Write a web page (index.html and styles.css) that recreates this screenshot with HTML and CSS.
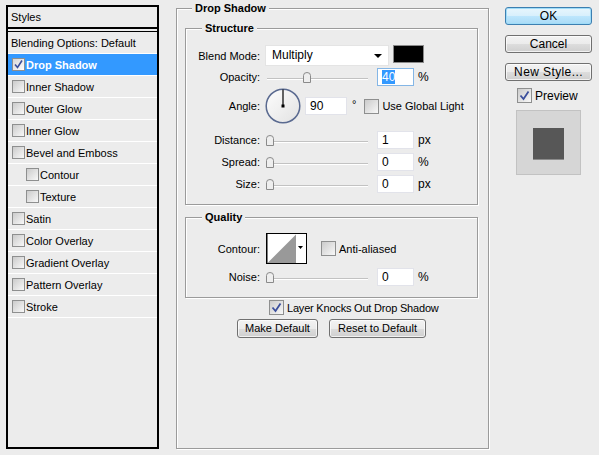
FILE: index.html
```html
<!DOCTYPE html>
<html lang="en">
<head>
    <meta charset="UTF-8">
    <title>Layer Style</title>
    <link rel="stylesheet" href="styles.css">
</head>
<body>
    <div class="dialog">
        <!-- Styles list -->
        <div class="styles-list">
            <div class="list-head">Styles</div>
            <ul class="list">
                <li class="item plain">Blending Options: Default</li>
                <li class="item selected"><span class="check"><svg width="11" height="11" viewBox="0 0 11 11"><path d="M2 5.5 L4.5 8.5 L9 1.5" fill="none" stroke="#3b4f9c" stroke-width="1.6"/></svg></span>Drop Shadow</li>
                <li class="item"><span class="check"></span>Inner Shadow</li>
                <li class="item"><span class="check"></span>Outer Glow</li>
                <li class="item"><span class="check"></span>Inner Glow</li>
                <li class="item"><span class="check"></span>Bevel and Emboss</li>
                <li class="item sub"><span class="check"></span>Contour</li>
                <li class="item sub"><span class="check"></span>Texture</li>
                <li class="item"><span class="check"></span>Satin</li>
                <li class="item"><span class="check"></span>Color Overlay</li>
                <li class="item"><span class="check"></span>Gradient Overlay</li>
                <li class="item"><span class="check"></span>Pattern Overlay</li>
                <li class="item"><span class="check"></span>Stroke</li>
            </ul>
        </div>

        <!-- Drop Shadow settings -->
        <div class="box main">
            <span class="legend">Drop Shadow</span>

            <div class="box group structure">
                <span class="legend">Structure</span>
                <div class="row row-blend">
                    <span class="lbl">Blend Mode:</span>
                    <div class="select">Multiply<span class="arrow"></span></div>
                    <div class="swatch"></div>
                </div>
                <div class="row">
                    <span class="lbl">Opacity:</span>
                    <div class="slider"><span class="thumb" style="left: 37px"><svg width="8" height="11" viewBox="0 0 8 11"><path d="M0.5 10.5 V3.5 Q0.5 0.5 4 0.5 Q7.5 0.5 7.5 3.5 V10.5 Z" fill="#eee" stroke="#8a8a8a"/></svg></span></div>
                    <div class="field focus"><span class="sel">40</span></div>
                    <span class="unit">%</span>
                </div>
                <div class="row row-angle">
                    <span class="lbl">Angle:</span>
                    <svg class="dial" width="36" height="36" viewBox="0 0 36 36">
                        <defs>
                            <linearGradient id="dialfill" x1="0" y1="0" x2="1" y2="1">
                                <stop offset="0" stop-color="#fdfdfd"/>
                                <stop offset="1" stop-color="#e2e2e2"/>
                            </linearGradient>
                        </defs>
                        <circle cx="18" cy="18" r="16.8" fill="url(#dialfill)" stroke="#5a6a90" stroke-width="1.5"/>
                        <line x1="18" y1="18" x2="18" y2="1.5" stroke="#000" stroke-width="1.2"/>
                        <rect x="16.5" y="16.5" width="3" height="3" fill="#000"/>
                    </svg>
                    <div class="field wide">90</div>
                    <span class="deg">°</span>
                    <span class="check big"></span>
                    <span class="chk-text">Use Global Light</span>
                </div>
                <div class="row row-gap">
                    <span class="lbl">Distance:</span>
                    <div class="slider"><span class="thumb"><svg width="8" height="11" viewBox="0 0 8 11"><path d="M0.5 10.5 V3.5 Q0.5 0.5 4 0.5 Q7.5 0.5 7.5 3.5 V10.5 Z" fill="#eee" stroke="#8a8a8a"/></svg></span></div>
                    <div class="field">1</div>
                    <span class="unit">px</span>
                </div>
                <div class="row">
                    <span class="lbl">Spread:</span>
                    <div class="slider"><span class="thumb"><svg width="8" height="11" viewBox="0 0 8 11"><path d="M0.5 10.5 V3.5 Q0.5 0.5 4 0.5 Q7.5 0.5 7.5 3.5 V10.5 Z" fill="#eee" stroke="#8a8a8a"/></svg></span></div>
                    <div class="field">0</div>
                    <span class="unit">%</span>
                </div>
                <div class="row">
                    <span class="lbl">Size:</span>
                    <div class="slider"><span class="thumb"><svg width="8" height="11" viewBox="0 0 8 11"><path d="M0.5 10.5 V3.5 Q0.5 0.5 4 0.5 Q7.5 0.5 7.5 3.5 V10.5 Z" fill="#eee" stroke="#8a8a8a"/></svg></span></div>
                    <div class="field">0</div>
                    <span class="unit">px</span>
                </div>
            </div>

            <div class="box group quality">
                <span class="legend">Quality</span>
                <div class="row row-contour">
                    <span class="lbl">Contour:</span>
                    <svg class="contour" width="41" height="31" viewBox="0 0 41 31">
                        <rect x="0.5" y="0.5" width="40" height="30" fill="#fff" stroke="#000"/>
                        <polygon points="1.5,30 30,1.5 30,30" fill="#999"/>
                        <line x1="1" y1="1" x2="1" y2="30" stroke="#000" stroke-width="1"/>
                        <polygon points="32,13 37,13 34.5,16" fill="#000"/>
                    </svg>
                    <span class="check big"></span>
                    <span class="chk-text">Anti-aliased</span>
                </div>
                <div class="row row-noise">
                    <span class="lbl">Noise:</span>
                    <div class="slider"><span class="thumb"><svg width="8" height="11" viewBox="0 0 8 11"><path d="M0.5 10.5 V3.5 Q0.5 0.5 4 0.5 Q7.5 0.5 7.5 3.5 V10.5 Z" fill="#eee" stroke="#8a8a8a"/></svg></span></div>
                    <div class="field">0</div>
                    <span class="unit">%</span>
                </div>
            </div>

            <div class="knockout">
                <span class="check big"><svg width="13" height="13" viewBox="0 0 13 13"><path d="M2.5 6.5 L5.5 10 L10.5 2.5" fill="none" stroke="#3b4f9c" stroke-width="1.8"/></svg></span>
                <span class="chk-text">Layer Knocks Out Drop Shadow</span>
            </div>

            <div class="buttons">
                <div class="btn btn-make">Make Default</div>
                <div class="btn btn-reset">Reset to Default</div>
            </div>
        </div>

        <!-- OK / Cancel column -->
        <div class="side">
            <div class="btn default">OK</div>
            <div class="btn">Cancel</div>
            <div class="btn last">New Style...</div>
            <div class="preview-toggle">
                <span class="check big"><svg width="13" height="13" viewBox="0 0 13 13"><path d="M2.5 6.5 L5.5 10 L10.5 2.5" fill="none" stroke="#3b4f9c" stroke-width="1.8"/></svg></span>
                <span class="chk-text">Preview</span>
            </div>
            <div class="preview">
                <div class="preview-square"></div>
            </div>
        </div>
    </div>
</body>
</html>
```

FILE: styles.css
```css
body {
    margin: 0;
    background-color: #ececec;
    font-family: "Liberation Sans", Arial, sans-serif;
    font-size: 11px;
    color: #000;
}
.dialog {
    display: flex;
    align-items: flex-start;
    width: 599px;
    height: 455px;
    padding: 5px 0 0 6px;
    box-sizing: border-box;
}

/* list of styles */
.styles-list {
    width: 153px;
    height: 444px;
    box-sizing: border-box;
    border: 2px solid #000;
    flex: none;
}
.list-head {
    height: 20px;
    line-height: 20px;
    padding-left: 3px;
    border-bottom: 2px solid #000;
    margin-bottom: 2px;
}
.list {
    list-style: none;
    margin: 0;
    padding: 0;
    border-top: 1px solid #000;
}
.item {
    display: flex;
    align-items: center;
    height: 21px;
    border-bottom: 1px solid #fff;
    padding-left: 4px;
}
.item.plain {
    padding-left: 3px;
}
.item.sub {
    padding-left: 18px;
}
.item.selected {
    background-color: #3399ff;
    color: #fff;
    font-weight: bold;
}

/* checkboxes */
.check {
    display: flex;
    align-items: center;
    justify-content: center;
    width: 13px;
    height: 13px;
    box-sizing: border-box;
    border: 1px solid #8e8f8f;
    background: linear-gradient(135deg, #cbcbcb, #f8f8f8);
    margin-right: 1px;
    flex: none;
}
.item.selected .check {
    background: linear-gradient(135deg, #d6d6d6, #fdfdfd);
}
.check.big {
    width: 15px;
    height: 15px;
    margin-right: 3px;
}

/* group boxes */
.box {
    position: relative;
    box-sizing: border-box;
    border: 1px solid #9b9b9b;
    box-shadow: inset 1px 1px 0 #fff, 1px 1px 0 #fff;
}
.main {
    width: 313px;
    height: 441px;
    margin: 3px 0 0 17px;
    padding: 19px 10px 0 8px;
    flex: none;
}
.legend {
    position: absolute;
    top: -7px;
    left: 15px;
    padding: 0 3px;
    line-height: 13px;
    background-color: #ececec;
    font-weight: bold;
}
.group .legend {
    left: 16px;
}
.structure {
    height: 177px;
    padding-top: 16px;
}
.quality {
    height: 81px;
    margin-top: 12px;
    padding-top: 15px;
}

/* rows */
.row {
    display: flex;
    align-items: center;
    height: 22px;
}
.row-blend {
    height: 21px;
}
.row-angle {
    height: 36px;
}
.row-gap {
    margin-top: 5px;
}
.row-contour {
    height: 31px;
}
.row-noise {
    height: 20px;
    margin-top: 3px;
}
.lbl {
    width: 74px;
    text-align: right;
    flex: none;
}

.select {
    position: relative;
    width: 124px;
    height: 21px;
    box-sizing: border-box;
    margin-left: 5px;
    padding-left: 6px;
    line-height: 19px;
    background-color: #fff;
    border: 1px solid #e4e4e4;
    font-size: 12px;
}
.arrow {
    position: absolute;
    right: 6px;
    top: 8px;
    border-left: 4px solid transparent;
    border-right: 4px solid transparent;
    border-top: 4px solid #000;
}
.swatch {
    align-self: flex-start;
    width: 31px;
    height: 18px;
    box-sizing: border-box;
    margin-left: 4px;
    background-color: #000;
    border: 1px solid #8a8a8a;
}

.slider {
    position: relative;
    width: 102px;
    height: 11px;
    margin-left: 6px;
    flex: none;
}
.slider::before {
    content: "";
    position: absolute;
    left: 1px;
    right: 0;
    top: 6px;
    height: 1px;
    background-color: #c2c2c2;
    border-bottom: 1px solid #fff;
}
.thumb {
    position: absolute;
    top: 0;
    left: 0;
    height: 11px;
}
.thumb svg {
    display: block;
}

.field {
    width: 37px;
    height: 18px;
    box-sizing: border-box;
    margin-left: 9px;
    padding-left: 4px;
    line-height: 16px;
    background-color: #fff;
    border: 1px solid #e2e3ea;
    font-size: 12px;
}
.field.focus {
    border-color: #84b6e6;
}
.field.wide {
    width: 42px;
    margin-left: 4px;
}
.sel {
    background-color: #3399ff;
    color: #fff;
}
.unit {
    margin-left: 4px;
    font-size: 12px;
}
.dial {
    margin-left: 5px;
    flex: none;
}
.deg {
    margin-left: 5px;
    align-self: flex-start;
    margin-top: 10px;
}
.row-angle .check {
    margin-left: 8px;
}
.contour {
    margin-left: 6px;
    flex: none;
}
.row-contour .check {
    margin-left: 14px;
}

.knockout {
    display: flex;
    align-items: center;
    height: 15px;
    margin: 2px 0 0 84px;
    letter-spacing: -0.2px;
}
.buttons {
    display: flex;
    justify-content: center;
    gap: 11px;
    margin-top: 4px;
}

/* buttons */
.btn {
    height: 18px;
    box-sizing: border-box;
    border: 1px solid #707070;
    border-radius: 3px;
    background: linear-gradient(#f3f3f3 0%, #ebebeb 50%, #dddddd 50%, #cfcfcf 100%);
    box-shadow: inset 0 0 0 1px rgba(255, 255, 255, 0.7);
    text-align: center;
    line-height: 16px;
    font-size: 12px;
}
.btn-make {
    width: 81px;
    height: 19px;
    line-height: 17px;
    font-size: 11px;
}
.btn-reset {
    width: 97px;
    height: 19px;
    line-height: 17px;
    font-size: 11px;
}
.btn.default {
    border-color: #3c7fb1;
    background: linear-gradient(#e8f6fd 0%, #d8effc 50%, #bee6fd 50%, #a9dbf6 100%);
    box-shadow: inset 0 0 0 1px #9fdcf8;
}

/* right column */
.side {
    display: flex;
    flex-direction: column;
    width: 87px;
    margin: 2px 0 0 16px;
    flex: none;
}
.side .btn {
    margin-bottom: 10px;
}
.side .btn.last {
    margin-bottom: 7px;
    letter-spacing: 0.4px;
}
.preview-toggle {
    display: flex;
    align-items: center;
    height: 15px;
    padding-left: 12px;
    font-size: 12px;
}
.preview {
    width: 65px;
    height: 65px;
    box-sizing: border-box;
    margin: 7px 0 0 11px;
    padding: 17px 0 0 16px;
    background-color: #d6d6d6;
    border: 1px solid #c2c2c2;
}
.preview-square {
    width: 31px;
    height: 31px;
    background-color: #575757;
    box-shadow: 0 1px 0 rgba(0, 0, 0, 0.35);
}
```
